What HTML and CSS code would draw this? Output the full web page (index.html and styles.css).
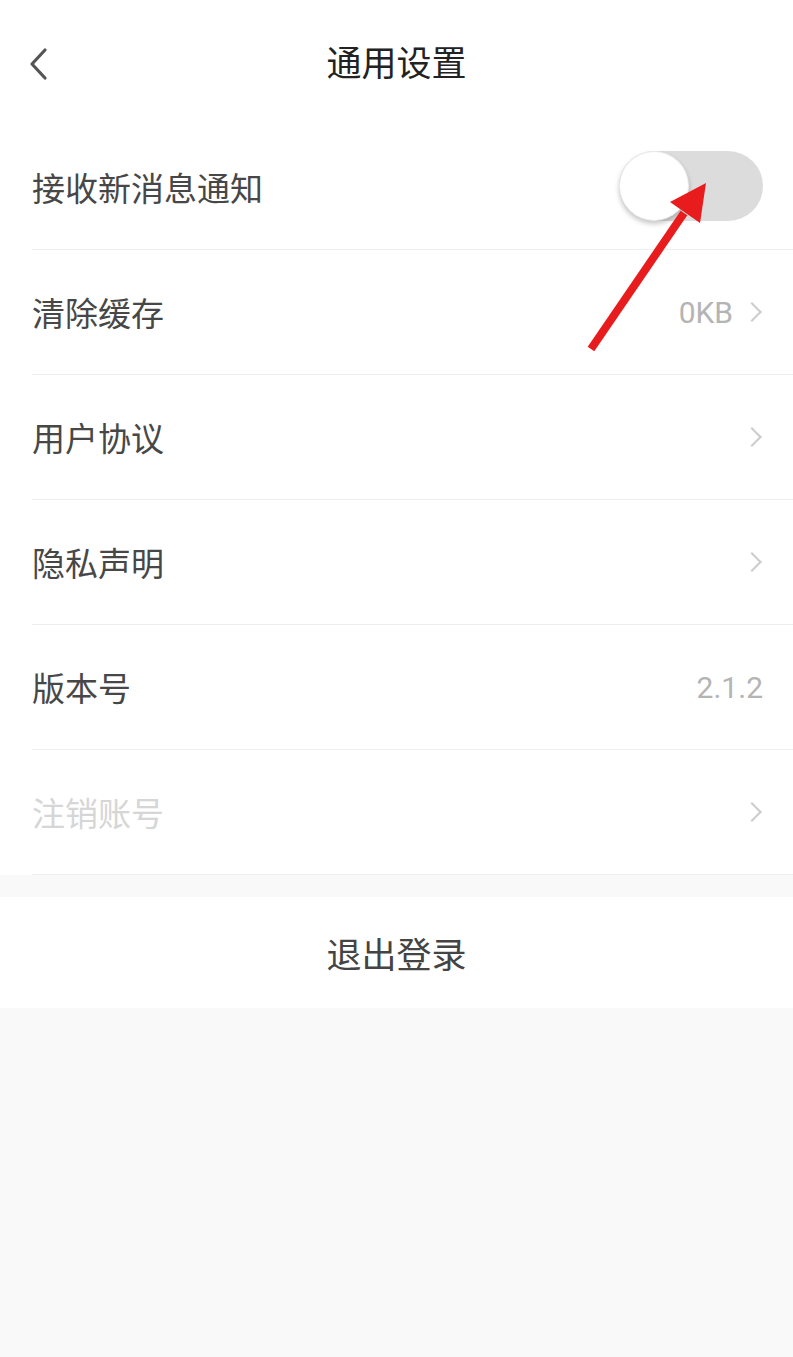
FILE: index.html
```html
<!DOCTYPE html>
<html>
<head>
    <title>通用设置</title>
    <link rel="stylesheet" href="styles.css">
</head>
<body>
<div class="page">
    <div class="header">
        <svg class="back" width="24" height="36" viewBox="0 0 24 36">
            <path d="M18 4 L5 18 L18 32" fill="none" stroke="#555" stroke-width="3.2" stroke-linecap="round" stroke-linejoin="round"/>
        </svg>
        <h1>通用设置</h1>
    </div>

    <div class="list">
        <div class="row">
            <span class="label">接收新消息通知</span>
            <div class="switch"><div class="knob"></div></div>
        </div>
        <div class="row">
            <span class="label">清除缓存</span>
            <span class="value">0KB</span>
            <span class="arrow"></span>
        </div>
        <div class="row">
            <span class="label">用户协议</span>
            <span class="arrow"></span>
        </div>
        <div class="row">
            <span class="label">隐私声明</span>
            <span class="arrow"></span>
        </div>
        <div class="row">
            <span class="label">版本号</span>
            <span class="value">2.1.2</span>
        </div>
        <div class="row">
            <span class="label disabled">注销账号</span>
            <span class="arrow"></span>
        </div>
    </div>

    <div class="logout">退出登录</div>

    <!-- annotation arrow drawn over the screenshot -->
    <svg class="pointer" width="793" height="400" viewBox="0 0 793 400">
        <line x1="591" y1="349" x2="684" y2="213" stroke="#e81b1d" stroke-width="8" stroke-linecap="butt"/>
        <polygon points="706,183 670,202 700,223" fill="#e81b1d"/>
    </svg>
</div>
</body>
</html>
```

FILE: styles.css
```css
* {
    box-sizing: border-box;
}

body {
    margin: 0;
    background: #f9f9f9;
    font-family: "Noto Sans CJK SC", "Noto Sans", sans-serif;
}

.page {
    position: relative;
    width: 793px;
    min-height: 1357px;
}

/* top bar */
.header {
    height: 125px;
    background: #fff;
    display: flex;
    align-items: center;
    justify-content: center;
    position: relative;
    padding-bottom: 4px;
}

.header h1 {
    margin: 0;
    font-size: 35px;
    font-weight: normal;
    color: #222;
}

.back {
    position: absolute;
    left: 27px;
    top: 46px;
}

/* settings rows */
.list {
    background: #fff;
    padding-left: 32px;
}

.row {
    height: 125px;
    display: flex;
    align-items: center;
    padding-right: 30px;
    border-bottom: 1px solid #eeeeee;
}

.label {
    flex: 1;
    font-size: 33px;
    color: #474747;
}

.label.disabled {
    color: #d6d6d6;
}

.value {
    font-family: Roboto, "Noto Sans", sans-serif;
    font-size: 30px;
    color: #b4b4b4;
}

.arrow {
    width: 14px;
    height: 14px;
    margin-left: 12px;
    margin-right: 4px;
    border-top: 2.5px solid #cccccc;
    border-right: 2.5px solid #cccccc;
    transform: rotate(45deg);
}

/* toggle switch, off state */
.switch {
    width: 144px;
    height: 70px;
    border-radius: 35px;
    background: #dcdcdc;
    margin-top: -2px;
    position: relative;
}

.knob {
    position: absolute;
    left: 0;
    top: 0;
    width: 70px;
    height: 70px;
    border-radius: 50%;
    background: #fff;
    border: 1px solid #ececec;
    box-shadow: 0 3px 5px rgba(0, 0, 0, 0.22);
}

.logout {
    margin-top: 22px;
    height: 111px;
    background: #fff;
    display: flex;
    align-items: center;
    justify-content: center;
    font-size: 35px;
    color: #444;
}

.pointer {
    position: absolute;
    left: 0;
    top: 0;
}
```
